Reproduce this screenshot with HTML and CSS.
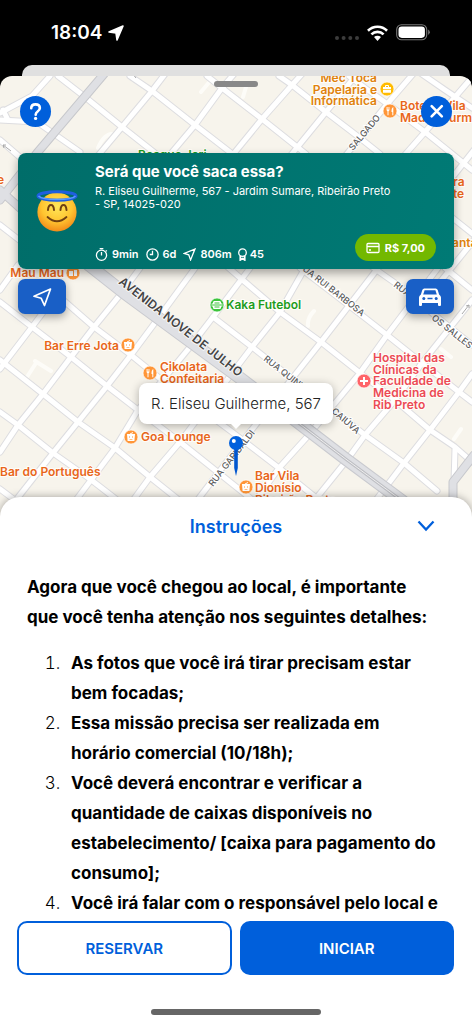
FILE: index.html
```html
<!DOCTYPE html>
<html lang="pt-BR">
<head>
<meta charset="utf-8">
<meta name="viewport" content="width=device-width, initial-scale=1">
<title>Instruções da missão</title>
<link rel="stylesheet" href="styles.css">
</head>
<body>
<div class="app">
  <header class="status">
    <div class="status-time">
      <span>18:04</span>
      <svg class="arrow" viewBox="0 0 16 16" aria-hidden="true"><path d="M15 1L9 15 8 8 1 7z" fill="#fff" stroke="#fff" stroke-width="1.600" stroke-linejoin="round"/></svg>
    </div>
    <div class="status-icons">
      <svg class="cell" viewBox="0 0 24 4" aria-hidden="true"><g fill="#3c3c3c"><circle cx="2" cy="2" r="2"/><circle cx="8.600" cy="2" r="2"/><circle cx="15.300" cy="2" r="2"/><circle cx="22" cy="2" r="2"/></g></svg>
      <svg class="wifi" viewBox="0 0 20 15" aria-hidden="true"><g fill="none" stroke="#fff" stroke-width="2.500"><path d="M.9 5.300a13 13 0 0 1 18.200 0"/><path d="M4.200 8.800a8.300 8.300 0 0 1 11.600 0"/></g><path d="M6.700 11.400a4.800 4.800 0 0 1 6.600 0L10 15z" fill="#fff"/></svg>
      <svg class="battery" viewBox="0 0 35 17" aria-hidden="true"><rect x=".7" y=".7" width="30" height="15" rx="4.800" fill="none" stroke="#777" stroke-width="1.100"/><rect x="2.500" y="2.500" width="26.400" height="11.400" rx="3.300" fill="#fff"/><path d="M32.200 5.500q3.200 2.700 0 5.400z" fill="#777"/></svg>
    </div>
  </header>
  <div class="back-sheet"></div>

  <main class="sheet">
    <section class="map" aria-label="Mapa">
      <svg class="map-canvas" viewBox="0 76 472 444" preserveAspectRatio="xMidYMin slice" aria-hidden="true">
        <defs>
          <g id="roads">
            <path d="M0 302L32 327 71 357 107 386 138 410 180 442 255 502"/>
            <path d="M0 360L43 394 78 422 115 448 150 477 190 509"/>
            <path d="M0 412L18 425 53 453 90 479 130 510"/>
            <path d="M0 489L24 507"/>
            <path d="M55 293L94 327 131 355 158 377 232 432 279 468 325 505"/>
            <path d="M213 317L252 347 290 377 365 435 404 463 437 491"/>
            <path d="M222 262L245 282 280 312 321 342 360 373 395 400 430 430 455 447 472 462"/>
            <path d="M300 268L364 317 387 335 422 363 459 392 472 402"/>
            <path d="M368 264L405 290 432 313 472 345"/>
            <path d="M445 268L472 290"/>
            <path d="M58 76L85 97 122 127 160 157"/>
            <path d="M130 76L152 91 195 125 235 156"/>
            <path d="M207 76L222 88 262 119 306 154"/>
            <path d="M279 76L292 85 326 112 360 138 380 154"/>
            <path d="M349 76L365 88 393 108 425 132 472 170"/>
            <path d="M419 72L445 90 472 108"/>
            <path d="M37 122L80 152"/><path d="M0 140L22 159"/>
            <path d="M50 76L32 96 0 113"/><path d="M0 120L37 122"/><path d="M3 110L8 120"/>
            <path d="M165 74L152 91 122 127 96 158"/>
            <path d="M234 74L222 88 195 125 168 157"/>
            <path d="M302 74L292 85 262 119 231 157"/>
            <path d="M357 74L326 112 291 155"/>
            <path d="M413 74L388 103 360 138 346 155"/>
            <path d="M474 75L425 132 403 157"/>
            <path d="M474 150L440 193"/><path d="M440 208L474 235"/><path d="M474 240L440 282"/>
            <path d="M305 268L280 312 252 347 180 442 150 477 134 499"/>
            <path d="M378 268L321 342 257 423 232 455 196 502"/>
            <path d="M250 268L213 317 190 347 138 410 115 448 76 500"/>
            <path d="M195 268L157 320 131 355 107 386 78 422 53 453 16 500"/>
            <path d="M140 268L120 295 94 327 71 357 43 394 18 425 0 452"/>
            <path d="M60 290L32 327 0 369"/><path d="M18 265L0 290"/><path d="M0 225L45 260"/>
            <path d="M438 268L387 335 360 373 307 437 279 468 256 500"/>
            <path d="M472 300L422 363 395 400 365 435 347 460 314 501"/>
            <path d="M472 374L459 392 430 430 404 463 376 500"/>
            <path d="M455 449L454 482"/>
          </g>
        </defs>
        <rect x="0" y="76" width="472" height="444" fill="#f7f4ec"/>
        <g fill="none" stroke-linejoin="round" stroke-linecap="round">
          <path d="M201 92L211 80 221 88M246 87L243 97M98 148q6-14 14-14M27 377l9-14M35 361l16 10M308 326q-1-8 6-15M441 349l10 8M454 439l7-10" stroke="#fdfcf8" stroke-width="4"/>
          <use href="#roads" stroke="#dddde0" stroke-width="7"/>
          <use href="#roads" stroke="#fff" stroke-width="5"/>
          <path d="M104 74L37 153 0 200M0 190L22 210" stroke="#c7c8cc" stroke-width="9"/>
          <path d="M104 74L37 153 0 200M0 190L22 210" stroke="#dfe0e4" stroke-width="7"/>
          <path d="M85 262L123 292 240 378 347 460 405 503" stroke="#c9cacf" stroke-width="13"/>
          <path d="M85 262L123 292 240 378 347 460 405 503" stroke="#dfe0e4" stroke-width="11"/>
          <path d="M292 418L347 460 405 503" stroke="#bfc0c5" stroke-width="3"/>
          <path d="M292 418L347 460 405 503" stroke="#eee" stroke-width="1"/>
          <path d="M474 455L453 482 453 500" stroke="#c7c8cc" stroke-width="9"/>
          <path d="M474 455L453 482 453 500" stroke="#dfe0e4" stroke-width="7"/>
        </g>
        <g fill="none" stroke="#aaa" stroke-width="1"><path d="M11 151L3 145m1 3l-1-3 3 0M462 314l7-9m-3 1l3-1 0 3M132 73l4 5"/></g>

        <g class="street">
          <text transform="translate(353 151) rotate(-50)">SALGADO</text>
          <text transform="translate(302 270) rotate(38)">UA RUI BARBOSA</text>
          <text transform="translate(393 286) rotate(38)">RUA</text>
          <text transform="translate(431 319) rotate(38)">OS SALLES</text>
          <text transform="translate(263 360) rotate(38)">RUA QUINT</text>
          <text transform="translate(331 412) rotate(41)">CAIÚVA</text>
          <text transform="translate(213 487) rotate(-52)">RUA GARIBALDI</text>
        </g>
        <text class="avenue" transform="translate(118 283) rotate(38)">AVENIDA NOVE DE JULHO</text>

        <g class="poi amber">
          <text class="end" x="377" y="82">Mec Toca</text><text class="end" x="377" y="94">Papelaria e</text><text class="end" x="377" y="105">Informática</text>
          <text x="452" y="247">anta</text>
        </g>
        <g class="poi orange">
          <text x="400" y="110">Boteco Vila</text><text x="400" y="122">Madre Gurmê</text>
          <text class="end" x="4" y="184">e</text><text x="453" y="186">ra</text><text x="453" y="198">te</text>
          <text class="end" x="64" y="277">Mau Mau</text><text class="end" x="119" y="350">Bar Erre Jota</text>
          <text x="160" y="371">Çikolata</text><text x="160" y="383">Confeitaria</text>
          <text x="141" y="441">Goa Lounge</text><text x="0" y="476">Bar do Português</text>
          <text x="255" y="480">Bar Vila</text><text x="255" y="492">Dionísio</text><text x="255" y="504">Ribeirão Preto</text>
        </g>
        <g class="poi green"><text x="226" y="309">Kaka Futebol</text><text x="138" y="159">Bosque Jari</text></g>
        <g class="poi red"><text x="373" y="362">Hospital das</text><text x="373" y="374">Clínicas da</text><text x="373" y="385">Faculdade de</text><text x="373" y="397">Medicina de</text><text x="373" y="409">Rib Preto</text></g>

        <g stroke="#fff" stroke-width=".7">
          <circle cx="387" cy="89" r="7" fill="#fb0"/>
          <g fill="#ff9638"><circle cx="390" cy="111" r="7"/><circle cx="73" cy="273" r="7"/><circle cx="128" cy="345" r="7"/><circle cx="150" cy="373" r="7"/><circle cx="131" cy="437" r="7"/><circle cx="246" cy="487" r="7"/></g>
          <circle cx="217" cy="305" r="7" fill="#3cc43c"/><circle cx="364" cy="381" r="7" fill="#ff6469"/>
        </g>
        <g fill="#fff">
          <path d="M383 87h8v2h-8zM383 89.700h8v3h-8z"/><path d="M385.500 87v-1.500h3V87" fill="none" stroke="#fff"/>
          <path d="M69 271h4v5h-4zM74 270h3v6h-3z"/>
          <path id="fork" d="M386.600 107v3q0 1 .9 1.300v4h1v-4q.9-.3.900-1.300v-3h-.7v2.500h-.5V107h-.6v2.500h-.4V107zM393.300 107q-2 1-1.800 5h.8v3.300h1z"/>
          <use href="#fork" x="-240" y="262"/>
          <g id="snack"><path d="M124 342h8l-.6 7h-6.800z"/><path d="M127 342l3-1.500" stroke="#fff"/><path d="M126 344.500h1v1h-1zM129 344.500h1v1h-1zM126 347q2 1.300 4 0" fill="#ff9638"/></g>
          <use href="#snack" x="3" y="92"/><use href="#snack" x="118" y="142"/>
          <path d="M214 301h6q1 0 1.300 2.500h1v3h-1q-.3 2.500-1.300 2.500h-6q-1 0-1.300-2.500h-1v-3h1q.3-2.500 1.300-2.500z"/>
          <path d="M212 305h10M214.500 303h5M214.500 307h5" stroke="#3cc43c"/>
          <path d="M363 377h2v3h3v2h-3v3h-2v-3h-3v-2h3z"/>
        </g>
      </svg>

      <span class="grabber"></span>
      <div class="overlay">
        <div class="top-actions">
          <button class="round" aria-label="Ajuda"><svg viewBox="0 0 32 32" aria-hidden="true"><path d="M11.600 12.700Q11.600 8.700 16 8.700t4.500 3.800q0 2-2.300 3.500-2 1.300-2 3.300" fill="none" stroke="#fff" stroke-width="2.700" stroke-linecap="round"/><circle cx="16.100" cy="23.200" r="1.700" fill="#fff"/></svg></button>
          <button class="round" aria-label="Fechar"><svg viewBox="0 0 32 32" aria-hidden="true"><path d="M11 10.500l10.500 10.500M21.500 10.500L11 21" stroke="#fff" stroke-width="2.700" stroke-linecap="round"/></svg></button>
        </div>

        <article class="card">
          <svg class="emoji" viewBox="0 0 42 42" role="img" aria-label="Rosto sorridente com auréola">
            <defs><radialGradient id="face" cx=".5" cy=".35" r=".65"><stop offset="0" stop-color="#ffe75a"/><stop offset=".6" stop-color="#ffc531"/><stop offset="1" stop-color="#f28a18"/></radialGradient></defs>
            <circle cx="21" cy="22" r="19.600" fill="url(#face)"/>
            <ellipse cx="21" cy="6" rx="19" ry="4.200" fill="none" stroke="#1f5fe0" stroke-width="3"/>
            <path d="M2.500 6Q6 9.600 21 9.600T39.500 6" fill="none" stroke="#5a9cff" stroke-width="1.500"/>
            <g fill="none" stroke="#714011" stroke-linecap="round"><path d="M12 20q.4-5 3-5t3 5M24.500 20q.4-5 3-5t3 5" stroke-width="2"/><path d="M11.500 27Q21 35.500 30.500 27" stroke-width="1.800"/></g>
          </svg>
          <div class="card-body">
            <h1>Será que você saca essa?</h1>
            <p>R. Eliseu Guilherme, 567 - Jardim Sumare, Ribeirão Preto - SP, 14025-020</p>
            <div class="card-foot">
              <ul class="stats">
                <li><svg viewBox="0 0 12 12" aria-hidden="true"><circle cx="6" cy="6.700" r="4.700"/><path d="M4.300.6h3.400M6 3.700v3.200M10 2.200l.9.900"/></svg>9min</li>
                <li><svg viewBox="0 0 12 12" aria-hidden="true"><circle cx="6" cy="6" r="5.200"/><path d="M6 2.600V6H3.500"/></svg>6d</li>
                <li><svg viewBox="0 0 12 12" aria-hidden="true"><path d="M11 1L1 5l4.300 1.300L7 11z"/></svg>806m</li>
                <li class="tight"><svg viewBox="0 0 12 12" aria-hidden="true"><circle cx="6" cy="4.300" r="3.500"/><path d="M4 7.400V11l2-1.300L8 11V7.400" stroke-width="1.700"/></svg>45</li>
              </ul>
              <span class="price"><svg viewBox="0 0 14 12" aria-hidden="true"><rect x="1" y="1.500" width="12" height="9" rx="1"/><path d="M1 4.500h12M3 8h2"/></svg>R$ 7,00</span>
            </div>
          </div>
        </article>

        <div class="map-actions">
          <button class="square" aria-label="Minha localização"><svg viewBox="0 0 24 24" aria-hidden="true"><path d="M20.500 4L4 11.300l7.200 2L14.500 20.500z" fill="none" stroke="#fff" stroke-width="1.700" stroke-linejoin="round"/></svg></button>
          <button class="square" aria-label="Rota de carro"><svg viewBox="0 -2 24 24" aria-hidden="true"><path d="M6.300 1.500h11.400q1.500 0 2 1.500l1.400 4.500Q23 9 23 10.500V18q0 1-1 1h-1q-1 0-1-1v-2H4v2q0 1-1 1H2q-1 0-1-1v-7.500Q1 9 2.900 7.500L4.300 3q.5-1.500 2-1.500z" fill="#fff"/><path d="M6.600 3.300h10.800l1.400 4.300H5.200zM9.500 10.800h5v1.500h-5z" fill="#195fc6"/><circle cx="5.800" cy="11.500" r="1.500" fill="#195fc6"/><circle cx="18.200" cy="11.500" r="1.500" fill="#195fc6"/></svg></button>
        </div>
      </div>

      <div class="callout">R. Eliseu Guilherme, 567</div>
      <svg class="pin" viewBox="0 0 14 42" aria-hidden="true"><path d="M5.200 13h3.600v20L7 41l-1.800-8z" fill="#0056cf"/><circle cx="7" cy="8" r="7" fill="#0060dc"/><circle cx="4.800" cy="6" r="2" fill="#fff"/></svg>
    </section>

    <section class="panel">
      <header class="panel-head">
        <h2>Instruções</h2>
        <button class="collapse" aria-label="Recolher instruções"><svg viewBox="0 0 18 12" aria-hidden="true"><path d="M1.500 1.500L9 9.500l7.500-8" fill="none" stroke="#005fdb" stroke-width="2.300"/></svg></button>
      </header>
      <div class="instructions">
        <p>Agora que você chegou ao local, é importante que você tenha atenção nos seguintes detalhes:</p>
        <ol>
          <li><strong>As fotos que você irá tirar precisam estar bem focadas;</strong></li>
          <li><strong>Essa missão precisa ser realizada em horário comercial (10/18h);</strong></li>
          <li><strong>Você deverá encontrar e verificar a quantidade de caixas disponíveis no estabelecimento/ [caixa para pagamento do consumo];</strong></li>
          <li><strong>Você irá falar com o responsável pelo local e</strong></li>
        </ol>
      </div>
      <footer class="actions">
        <button class="btn outline">RESERVAR</button>
        <button class="btn solid">INICIAR</button>
      </footer>
      <div class="home"></div>
    </section>
  </main>
</div>
</body>
</html>
```

FILE: styles.css
```css
* { box-sizing: border-box; }
body { margin: 0; background: #000; font-family: Inter, "Noto Sans", sans-serif; color: #000; }
button { border: 0; padding: 0; font: inherit; cursor: pointer; }
svg { display: block; flex: none; }
h1, h2, p, ul, ol { margin: 0; padding: 0; }

.app { height: 100vh; display: flex; flex-direction: column; overflow: hidden; }

.status { height: 65px; flex: none; padding: 0 41px 0 51px; display: flex; align-items: center; justify-content: space-between; color: #fff; }
.status-time { display: flex; align-items: center; gap: 6px; font-size: 19px; font-weight: 600; }
.arrow { width: 16px; height: 16px; }
.status-icons { display: flex; align-items: center; gap: 8px; }
.cell { width: 24px; height: 4px; margin-top: 10px; }
.wifi { width: 21px; height: 16px; }
.battery { width: 35px; height: 17px; }

.back-sheet { height: 11px; flex: none; margin: 0 22px; background: #e0e0e0; border-radius: 10px 10px 0 0; }
.sheet { flex: 1; min-height: 0; display: flex; flex-direction: column; overflow: hidden; border-radius: 12px 12px 0 0; }

.map { position: relative; flex: none; height: 421px; }
.map-canvas { position: absolute; top: 0; left: 0; width: 100%; height: 444px; }
.poi { font-size: 12px; font-weight: 600; paint-order: stroke; stroke: #fffdf8; stroke-width: 2px; }
.end { text-anchor: end; }
.orange { fill: #e8661b; }
.amber { fill: #e0820c; }
.green { fill: #1d9c1d; }
.red { fill: #ec4a55; }
.street { font-size: 9px; font-weight: 500; fill: #5c5c5c; paint-order: stroke; stroke: #fff; stroke-width: 2px; }
.avenue { font-size: 12px; font-weight: 600; fill: #444; paint-order: stroke; stroke: #f4f4f4; stroke-width: 2px; }

.grabber { position: absolute; top: 5px; left: 50%; width: 44px; height: 6px; margin-left: -22px; border-radius: 3px; background: #888; }
.overlay { position: relative; padding: 20px 18px 0; }
.top-actions { display: flex; justify-content: space-between; padding: 0 2px; }
.round { width: 31px; height: 31px; border-radius: 50%; background: #005fdb; }
.round svg { width: 31px; height: 31px; }

.card { display: flex; margin-top: 26px; min-height: 116px; padding: 10px 18px 8px; border-radius: 8px; background: linear-gradient(100deg, #006d69, #007a75); color: #fff; box-shadow: 0 4px 10px rgba(0, 0, 0, .35); }
.emoji { width: 42px; height: 42px; margin: 27px 17px 0 0; }
.card-body { flex: 1; display: flex; flex-direction: column; }
.card h1 { font-size: 15px; line-height: 18px; font-weight: 700; }
.card p { max-width: 302px; margin-top: 4px; font-size: 11px; line-height: 13px; }
.card-foot { margin-top: auto; display: flex; align-items: flex-end; justify-content: space-between; }
.stats { display: flex; gap: 7px; list-style: none; font-size: 11px; line-height: 14px; font-weight: 600; }
.stats li { display: flex; align-items: center; gap: 4px; }
.stats .tight { gap: 1px; margin-left: -3px; }
.stats svg { width: 13px; height: 13px; fill: none; stroke: #fff; stroke-width: 1.200; }
.price { display: flex; align-items: center; gap: 5px; height: 27px; padding: 0 11px; border-radius: 14px; background: #73b800; font-size: 11px; font-weight: 700; }
.price svg { width: 14px; height: 12px; fill: none; stroke: #fff; stroke-width: 1.300; }

.map-actions { display: flex; justify-content: space-between; margin-top: 10px; }
.square { width: 48px; height: 35px; display: flex; align-items: center; justify-content: center; border-radius: 7px; background: #195fc6; box-shadow: 0 3px 8px rgba(0, 0, 0, .35); }
.square svg { width: 24px; height: 24px; }

.callout { position: absolute; top: 307px; left: 50%; transform: translateX(-50%); padding: 0 12px; border-radius: 8px; background: #fff; color: #222; font-size: 15px; font-weight: 300; line-height: 41px; white-space: nowrap; box-shadow: 0 2px 10px rgba(0, 0, 0, .3); }
.callout::after { content: ""; position: absolute; top: 100%; left: 50%; margin-left: -5px; border: 5px solid transparent; border-top-color: #fff; border-bottom: 0; }
.pin { position: absolute; top: 359px; left: 50%; width: 14px; height: 42px; margin-left: -7px; }

.panel { position: relative; flex: 1; min-height: 0; display: flex; flex-direction: column; background: #fff; border-radius: 20px 20px 0 0; box-shadow: 0 0 8px rgba(0, 0, 0, .35); }
.panel-head { position: relative; flex: none; height: 58px; display: flex; align-items: center; justify-content: center; }
.panel-head h2 { font-size: 18px; font-weight: 600; color: #005fdb; }
.collapse { position: absolute; right: 33px; padding: 4px; background: none; }
.collapse svg { width: 18px; height: 12px; }
.instructions { flex: 1; min-height: 0; overflow: hidden; padding: 17px 32px 0 27px; font-size: 17px; line-height: 30px; }
.instructions p, .instructions strong { font-weight: 700; }
.instructions ol { margin-top: 16px; padding-left: 38px; }
.instructions li { padding-left: 6px; font-weight: 300; }
.actions { flex: none; display: grid; grid-template-columns: 1fr 1fr; gap: 8px; padding: 8px 18px 0 17px; }
.btn { height: 54px; border-radius: 10px; font-size: 15px; font-weight: 600; }
.outline { border: 2px solid #005fdb; background: #fff; color: #005fdb; }
.solid { background: #005fdb; color: #fff; }
.home { flex: none; width: 36%; height: 6px; margin: 34px auto 9px; border-radius: 3px; background: #666; }
```
